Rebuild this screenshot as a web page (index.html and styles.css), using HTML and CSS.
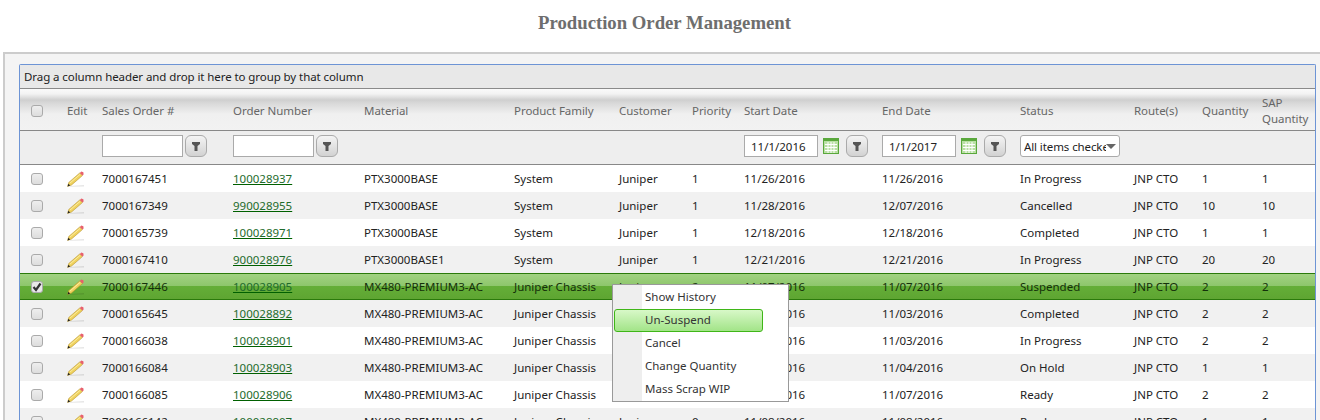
FILE: index.html
```html
<!DOCTYPE html>
<html lang="en">
<head>
    <meta charset="UTF-8">
    <title>Production Order Management</title>
    <link rel="stylesheet" href="styles.css">
</head>
<body>

<svg class="icon-defs" width="0" height="0">
    <symbol id="pencil" viewBox="0 0 18 16">
        <path d="M3 15 L17 14 L17 15.500 L3 15.800 Z" fill="#000" fill-opacity=".1"/>
        <path d="M.6 15.400 L1.800 11.400 L12.800 1.900 L15.400 4.600 L4.500 14 Z" fill="#efd25e" stroke="#b8932a" stroke-width=".6"/>
        <path d="M3 12 L13.300 3.200" stroke="#fff2b0" stroke-width=".8"/>
        <path d="M12.800 1.900 L14.300 .6 L16.400 1.200 L16.600 3.500 L15.400 4.600 Z" fill="#e8606c"/>
        <path d="M.6 15.400 L1.400 12.800 L3.200 14.400 Z" fill="#222"/>
    </symbol>
    <symbol id="funnel" viewBox="0 0 8 9">
        <path d="M0 0 H8 V2 L5.500 4 V9 H2.500 V4 L0 2 Z" fill="#555"/>
    </symbol>
    <symbol id="calendar" viewBox="0 0 16 16">
        <rect x=".5" y=".5" width="15" height="15" fill="#b9e0a4" stroke="#5aa83c"/>
        <rect x="1" y="1" width="14" height="2" fill="#5aa83c"/>
        <path d="M5 4 V15 M8 4 V15 M11 4 V15 M2 6.500 H14 M2 9.500 H14 M2 12.500 H14" stroke="#fff" stroke-width="1"/>
    </symbol>
    <symbol id="tick" viewBox="0 0 12 12">
        <path d="M2.500 6 L5 9 L9.500 2.500" fill="none" stroke="#333" stroke-width="2.200"/>
    </symbol>
</svg>

<h1 class="page-title">Production Order Management</h1>

<div class="panel">
    <div class="grid">
        <div class="group-bar">Drag a column header and drop it here to group by that column</div>
        <table class="orders">
            <colgroup>
                <col class="col-check"><col class="col-edit"><col class="col-sales"><col class="col-order">
                <col class="col-material"><col class="col-family"><col class="col-customer"><col class="col-priority">
                <col class="col-start"><col class="col-end"><col class="col-status"><col class="col-route">
                <col class="col-qty"><col class="col-sap">
            </colgroup>
            <thead>
                <tr class="head-row">
                    <th class="cell-check"><span class="chk"></span></th>
                    <th>Edit</th>
                    <th>Sales Order #</th>
                    <th>Order Number</th>
                    <th>Material</th>
                    <th>Product Family</th>
                    <th>Customer</th>
                    <th>Priority</th>
                    <th>Start Date</th>
                    <th>End Date</th>
                    <th>Status</th>
                    <th>Route(s)</th>
                    <th>Quantity</th>
                    <th>SAP Quantity</th>
                </tr>
                <tr class="filter-row">
                    <td></td>
                    <td></td>
                    <td><div class="filter"><input class="text-box" type="text"><button class="filter-btn"><svg width="8" height="9"><use href="#funnel"/></svg></button></div></td>
                    <td><div class="filter"><input class="text-box" type="text"><button class="filter-btn"><svg width="8" height="9"><use href="#funnel"/></svg></button></div></td>
                    <td></td>
                    <td></td>
                    <td></td>
                    <td></td>
                    <td><div class="filter"><input class="date-box" type="text" value="11/1/2016"><svg class="cal" width="16" height="16"><use href="#calendar"/></svg><button class="filter-btn"><svg width="8" height="9"><use href="#funnel"/></svg></button></div></td>
                    <td><div class="filter"><input class="date-box" type="text" value="1/1/2017"><svg class="cal" width="16" height="16"><use href="#calendar"/></svg><button class="filter-btn"><svg width="8" height="9"><use href="#funnel"/></svg></button></div></td>
                    <td><div class="status-select"><span class="status-text">All items checked</span><span class="arrow"></span></div></td>
                    <td></td>
                    <td></td>
                    <td></td>
                </tr>
            </thead>
            <tbody>
                <tr>
                    <td class="cell-check"><span class="chk"></span></td>
                    <td><svg class="pencil" width="18" height="16"><use href="#pencil"/></svg></td>
                    <td>7000167451</td><td><a href="#">100028937</a></td><td>PTX3000BASE</td><td>System</td><td>Juniper</td><td>1</td>
                    <td>11/26/2016</td><td>11/26/2016</td><td>In Progress</td><td>JNP CTO</td><td>1</td><td>1</td>
                </tr>
                <tr>
                    <td class="cell-check"><span class="chk"></span></td>
                    <td><svg class="pencil" width="18" height="16"><use href="#pencil"/></svg></td>
                    <td>7000167349</td><td><a href="#">990028955</a></td><td>PTX3000BASE</td><td>System</td><td>Juniper</td><td>1</td>
                    <td>11/28/2016</td><td>12/07/2016</td><td>Cancelled</td><td>JNP CTO</td><td>10</td><td>10</td>
                </tr>
                <tr>
                    <td class="cell-check"><span class="chk"></span></td>
                    <td><svg class="pencil" width="18" height="16"><use href="#pencil"/></svg></td>
                    <td>7000165739</td><td><a href="#">100028971</a></td><td>PTX3000BASE</td><td>System</td><td>Juniper</td><td>1</td>
                    <td>12/18/2016</td><td>12/18/2016</td><td>Completed</td><td>JNP CTO</td><td>1</td><td>1</td>
                </tr>
                <tr>
                    <td class="cell-check"><span class="chk"></span></td>
                    <td><svg class="pencil" width="18" height="16"><use href="#pencil"/></svg></td>
                    <td>7000167410</td><td><a href="#">900028976</a></td><td>PTX3000BASE1</td><td>System</td><td>Juniper</td><td>1</td>
                    <td>12/21/2016</td><td>12/21/2016</td><td>In Progress</td><td>JNP CTO</td><td>20</td><td>20</td>
                </tr>
                <tr class="selected">
                    <td class="cell-check"><span class="chk"><svg width="12" height="12"><use href="#tick"/></svg></span></td>
                    <td><svg class="pencil" width="18" height="16"><use href="#pencil"/></svg></td>
                    <td>7000167446</td><td><a href="#">100028905</a></td><td>MX480-PREMIUM3-AC</td><td>Juniper Chassis</td><td>Juniper</td><td>2</td>
                    <td>11/07/2016</td><td>11/07/2016</td><td>Suspended</td><td>JNP CTO</td><td>2</td><td>2</td>
                </tr>
                <tr>
                    <td class="cell-check"><span class="chk"></span></td>
                    <td><svg class="pencil" width="18" height="16"><use href="#pencil"/></svg></td>
                    <td>7000165645</td><td><a href="#">100028892</a></td><td>MX480-PREMIUM3-AC</td><td>Juniper Chassis</td><td>Juniper</td><td>2</td>
                    <td>11/03/2016</td><td>11/03/2016</td><td>Completed</td><td>JNP CTO</td><td>2</td><td>2</td>
                </tr>
                <tr>
                    <td class="cell-check"><span class="chk"></span></td>
                    <td><svg class="pencil" width="18" height="16"><use href="#pencil"/></svg></td>
                    <td>7000166038</td><td><a href="#">100028901</a></td><td>MX480-PREMIUM3-AC</td><td>Juniper Chassis</td><td>Juniper</td><td>2</td>
                    <td>11/03/2016</td><td>11/03/2016</td><td>In Progress</td><td>JNP CTO</td><td>2</td><td>2</td>
                </tr>
                <tr>
                    <td class="cell-check"><span class="chk"></span></td>
                    <td><svg class="pencil" width="18" height="16"><use href="#pencil"/></svg></td>
                    <td>7000166084</td><td><a href="#">100028903</a></td><td>MX480-PREMIUM3-AC</td><td>Juniper Chassis</td><td>Juniper</td><td>1</td>
                    <td>11/04/2016</td><td>11/04/2016</td><td>On Hold</td><td>JNP CTO</td><td>1</td><td>1</td>
                </tr>
                <tr>
                    <td class="cell-check"><span class="chk"></span></td>
                    <td><svg class="pencil" width="18" height="16"><use href="#pencil"/></svg></td>
                    <td>7000166085</td><td><a href="#">100028906</a></td><td>MX480-PREMIUM3-AC</td><td>Juniper Chassis</td><td>Juniper</td><td>2</td>
                    <td>11/07/2016</td><td>11/07/2016</td><td>Ready</td><td>JNP CTO</td><td>2</td><td>2</td>
                </tr>
                <tr>
                    <td class="cell-check"><span class="chk"></span></td>
                    <td><svg class="pencil" width="18" height="16"><use href="#pencil"/></svg></td>
                    <td>7000166142</td><td><a href="#">100028907</a></td><td>MX480-PREMIUM3-AC</td><td>Juniper Chassis</td><td>Juniper</td><td>0</td>
                    <td>11/08/2016</td><td>11/08/2016</td><td>Ready</td><td>JNP CTO</td><td>1</td><td>1</td>
                </tr>
            </tbody>
        </table>
    </div>
</div>

<ul class="context-menu">
    <li>Show History</li>
    <li class="active">Un-Suspend</li>
    <li>Cancel</li>
    <li>Change Quantity</li>
    <li>Mass Scrap WIP</li>
</ul>

</body>
</html>
```

FILE: styles.css
```css
html, body {
    height: 100%;
    overflow: hidden;
}
body {
    margin: 0;
    background-color: #fff;
    font-family: "Noto Sans", Arial, sans-serif;
    font-size: 11.5px;
    color: #222;
}
.icon-defs {
    position: absolute;
}
.page-title {
    margin: 0;
    padding: 12px 0 0 9px;
    height: 39px;
    box-sizing: border-box;
    text-align: center;
    font-family: "Liberation Serif", serif;
    font-size: 18.72px;
    font-weight: bold;
    line-height: 21px;
    color: #6e6e6e;
}
.panel {
    margin: 13px 0 0 3px;
    padding: 10px 4px 0 14px;
    border-top: 2px solid #ccc;
    border-left: 2px solid #ccc;
    background-color: #f4f4f4;
}
.grid {
    border: 1px solid #6d94d5;
    border-bottom: none;
    border-radius: 2px 2px 0 0;
    background-color: #fff;
}
.group-bar {
    height: 23px;
    line-height: 23px;
    padding-left: 4px;
    background-color: #e8e8e8;
    border-bottom: 1px solid #8a8a8a;
    color: #222;
    letter-spacing: -0.08px;
}
.orders {
    width: 100%;
    table-layout: fixed;
    border-collapse: separate;
    border-spacing: 0;
}
.col-check { width: 40px; }
.col-edit { width: 35px; }
.col-sales { width: 131px; }
.col-order { width: 131px; }
.col-material { width: 150px; }
.col-family { width: 105px; }
.col-customer { width: 73px; }
.col-priority { width: 52px; }
.col-start { width: 138px; }
.col-end { width: 138px; }
.col-status { width: 114px; }
.col-route { width: 68px; }
.col-qty { width: 60px; }
.orders th, .orders td {
    box-sizing: border-box;
    padding: 0 0 0 7px;
    white-space: nowrap;
    overflow: hidden;
    text-align: left;
    font-weight: normal;
}
.head-row {
    background: linear-gradient(to bottom, #fafafa 0, #f2f2f2 5px, #cfcfcf 11px, #d8d8d8 14px, #f0f0f0 25px, #f2f2f2 100%);
}
.orders .head-row th {
    height: 42px;
    padding-top: 2px;
    border-bottom: 1px solid #888;
    color: #666;
    letter-spacing: -0.05px;
    white-space: normal;
    line-height: 16px;
}
.filter-row {
    background-color: #eee;
}
.orders .filter-row td {
    height: 34px;
    padding-bottom: 3px;
    border-bottom: 1px solid #888;
}
.orders tbody td {
    height: 27px;
}
.orders tbody tr:nth-child(even) {
    background-color: #f1f1f1;
}
.orders .cell-check {
    padding-left: 11px;
}
.orders a {
    color: #1e6b2c;
    text-decoration-color: #006000;
}
.chk {
    display: block;
    width: 10px;
    height: 10px;
    border: 1px solid #aaa;
    border-radius: 3px;
    background: linear-gradient(to bottom, #eee, #ddd);
}
.chk svg {
    display: block;
    margin: -1px;
}
.pencil {
    display: block;
}
.filter {
    display: flex;
    align-items: center;
}
.text-box, .date-box {
    box-sizing: border-box;
    height: 22px;
    padding: 0;
    border: 1px solid #aaa;
    background-color: #fff;
    font-family: inherit;
    font-size: inherit;
    color: #222;
}
.text-box {
    width: 81px;
    margin-right: 2px;
}
.date-box {
    width: 74px;
    padding-left: 6px;
    margin-right: 5px;
}
.cal {
    margin-right: 7px;
}
.filter-btn {
    display: flex;
    align-items: center;
    justify-content: center;
    box-sizing: border-box;
    width: 22px;
    height: 22px;
    padding: 0;
    border: 1px solid #aaa;
    border-radius: 6px;
    background: linear-gradient(to bottom, #f4f4f4, #d2d2d2);
}
.status-select {
    display: flex;
    align-items: center;
    box-sizing: border-box;
    width: 100px;
    height: 22px;
    padding-left: 3px;
    border: 1px solid #aaa;
    border-radius: 3px;
    background-color: #fff;
}
.status-text {
    width: 82px;
    overflow: hidden;
    letter-spacing: -0.1px;
}
.arrow {
    width: 0;
    height: 0;
    border-left: 5px solid transparent;
    border-right: 5px solid transparent;
    border-top: 5px solid #666;
}
.selected td {
    background: linear-gradient(to bottom, #a2d282 0, #8dc66b 48%, #64ae37 49%, #5ea532 100%);
    border-top: 1px solid #2b7a0b;
    border-bottom: 1px solid #2b7a0b;
    color: #14300a;
}
.selected .chk {
    background: #e8e8e8;
}
.context-menu {
    position: absolute;
    left: 612px;
    top: 284px;
    box-sizing: border-box;
    width: 177px;
    height: 118px;
    margin: 0;
    padding: 1px 0 0 0;
    list-style: none;
    border: 1px solid #999;
    background: linear-gradient(to right, #eee 29px, #fff 29px);
}
.context-menu li {
    box-sizing: border-box;
    height: 23px;
    line-height: 22px;
    padding-left: 32px;
    color: #333;
}
.context-menu .active {
    width: 149px;
    margin-left: 1px;
    padding-left: 30px;
    border: 1px solid #3fb618;
    border-radius: 3px;
    line-height: 20px;
    background: linear-gradient(to bottom, #d8f8c8, #a2e488);
}
```
